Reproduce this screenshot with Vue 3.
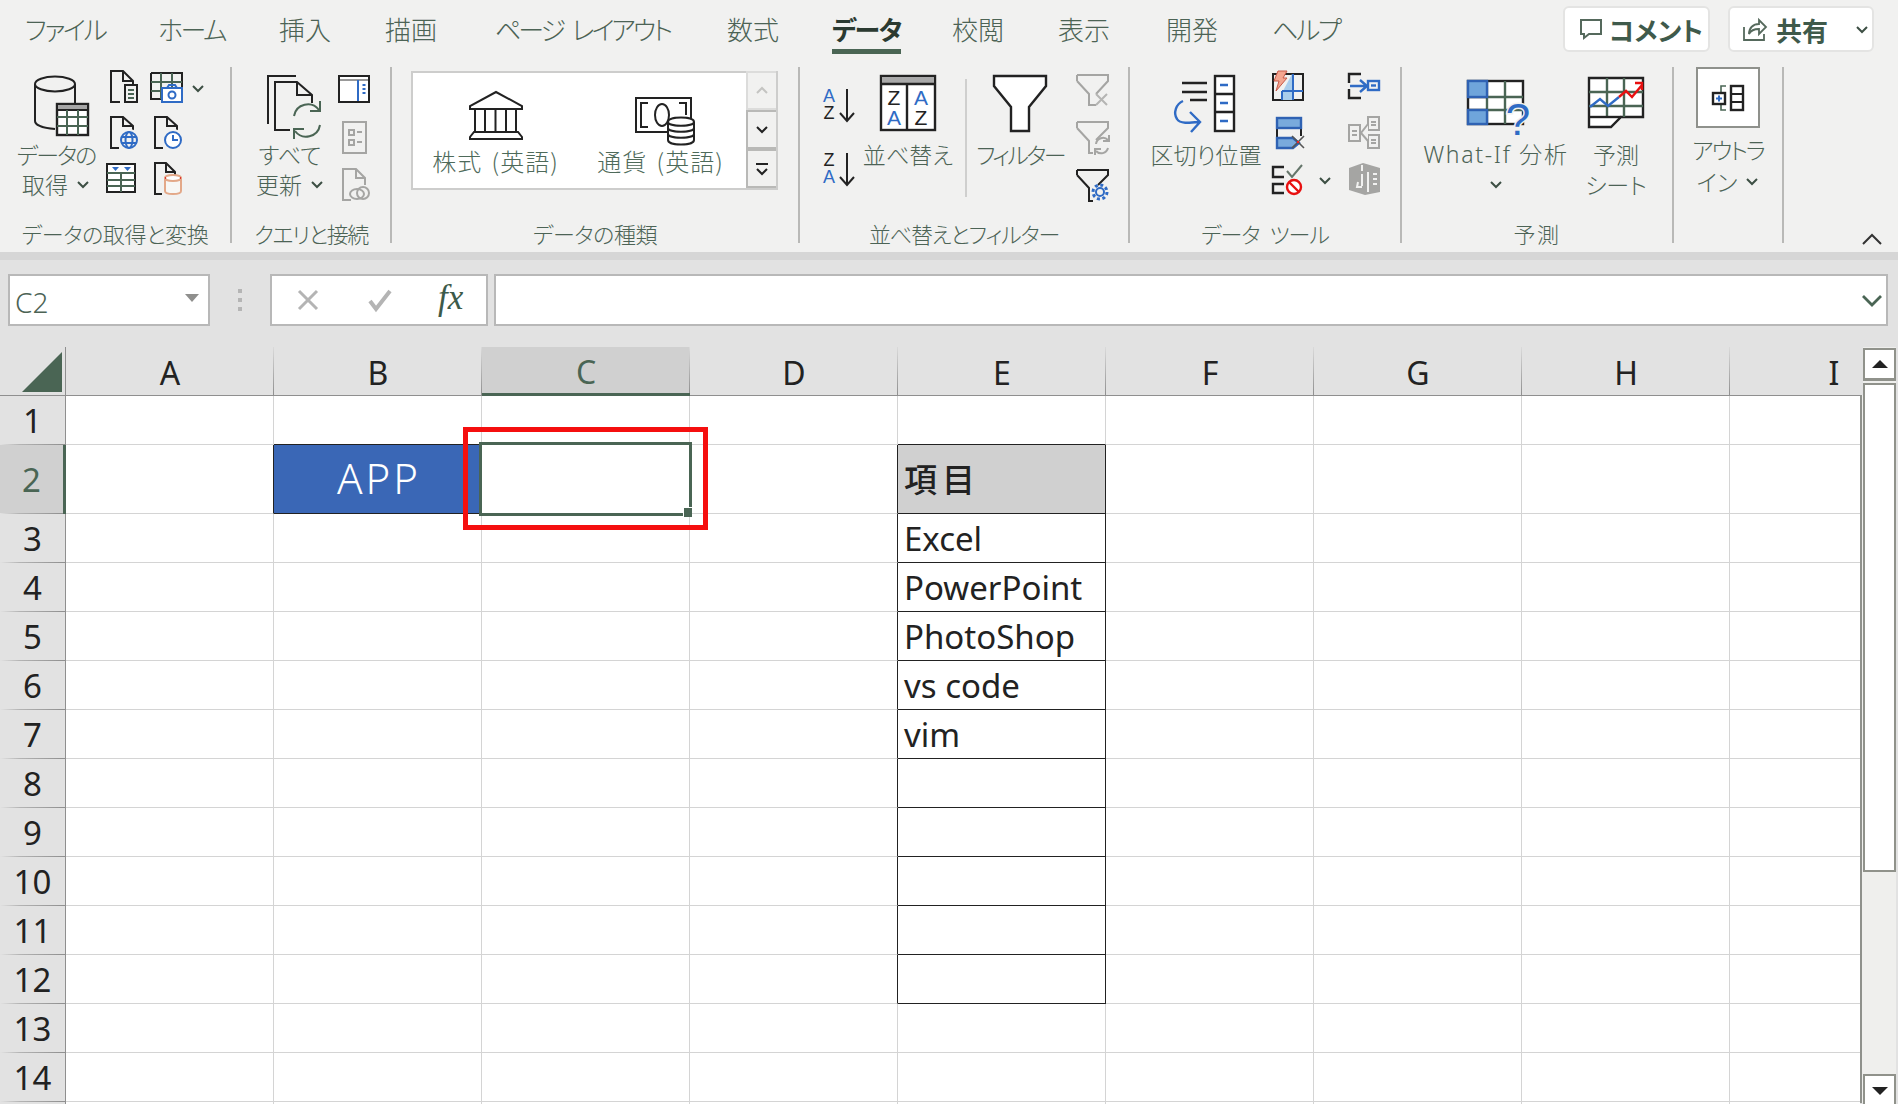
<script setup>
// width = distance to the next tab, text is left aligned inside
const tabs = [
  { label: 'ファイル', width: 133, kana: true },
  { label: 'ホーム', width: 121, kana: true },
  { label: '挿入', width: 106 },
  { label: '描画', width: 110 },
  { label: 'ページ レイアウト', width: 232, kana: true, spaced: true },
  { label: '数式', width: 105 },
  { label: 'データ', width: 120, active: true },
  { label: '校閲', width: 106 },
  { label: '表示', width: 108 },
  { label: '開発', width: 106 },
  { label: 'ヘルプ', width: 70, kana: true }
]
const columns = ['A', 'B', 'C', 'D', 'E', 'F', 'G', 'H', 'I']
const rowNumbers = Array.from({ length: 15 }, (_, i) => i + 1)

const cells = {
  B2: 'APP',
  E2: '項目',
  E3: 'Excel',
  E4: 'PowerPoint',
  E5: 'PhotoShop',
  E6: 'vs code',
  E7: 'vim'
}

function inItemTable(col, row) {
  return col === 'E' && row >= 2 && row <= 12
}

function cellClass(col, row) {
  const next = columns[columns.indexOf(col) + 1]
  return {
    'cell--app': col === 'B' && row === 2,
    'cell--head': col === 'E' && row === 2,
    'cell--framed': inItemTable(col, row),
    'cell--dark-right': inItemTable(next, row) || (next === 'B' && row === 2),
    'cell--dark-bottom': inItemTable(col, row + 1) || (col === 'B' && row === 1)
  }
}
</script>

<template>
  <div class="excel">
    <section class="ribbon">
      <div class="ribbon__top">
        <nav class="tabs">
          <div v-for="tab in tabs" :key="tab.label" class="tab" :style="{ width: tab.width + 'px' }">
            <span
              class="tab__label"
              :class="{ 'tab__label--active': tab.active, 'tab__label--kana': tab.kana, 'tab__label--spaced': tab.spaced }"
            >{{ tab.label }}</span>
          </div>
        </nav>
        <div class="actions">
          <button class="action action--comment" type="button">
            <svg width="24" height="22" viewBox="0 0 24 22" fill="none" stroke="#55695c" stroke-width="2"><path d="M2 2h20v14H10l-5 4v-4H2z"/></svg>
            <strong>コメント</strong>
          </button>
          <button class="action action--share" type="button">
            <svg width="26" height="24" viewBox="0 0 26 24" fill="none" stroke="#55695c" stroke-width="1.8"><path d="M2 10v13h20v-6"/><path d="M7 17c0-6 4-10 10-10V3l7 7-7 7v-5c-4 0-8 1-10 5z"/></svg>
            <strong>共有</strong>
            <svg class="chev chev--share" width="14" height="9" viewBox="0 0 14 9"><path d="M2 2l5 5 5-5"/></svg>
          </button>
        </div>
      </div>

      <div class="groups">
        <!-- データの取得と変換 -->
        <div class="group group--get">
          <div class="group__body">
            <div class="big big--w100">
              <svg class="big__icon big__icon--db" width="56" height="62" viewBox="0 0 56 62" fill="none" stroke="#222" stroke-width="2">
                <ellipse cx="21" cy="9" rx="20" ry="7.5"/>
                <path d="M1 9v37c0 4 8 7 20 8M41 9v19"/>
                <rect x="23" y="29" width="31" height="31" fill="#fff" stroke-width="2.4"/>
                <rect x="23" y="29" width="31" height="6" fill="#a6a6a6"/>
                <path stroke="#4a6554" d="M33 35v25M44 35v25M23 42h31M23 51h31"/>
              </svg>
              <span class="big__text big__text--tight">データの</span>
              <span class="big__text">取得<svg class="chev" width="14" height="9" viewBox="0 0 14 9"><path d="M2 2l5 5 5-5"/></svg></span>
            </div>
            <div class="small-col small-col--get1">
              <svg width="32" height="33" viewBox="0 0 32 33" fill="none" stroke="#222" stroke-width="2">
                <path d="M14 32H5V1h12l10 10v3M17 1v10h10"/>
                <rect x="19" y="15" width="12" height="17" fill="#f1f1f0"/>
                <path stroke="#4a6554" d="M22 20h6M22 24h6M22 28h6"/>
              </svg>
              <svg width="32" height="33" viewBox="0 0 32 33" fill="none" stroke="#222" stroke-width="2">
                <path d="M13 32H5V1h12l10 9v6M17 1v9h10"/>
                <circle cx="23" cy="24" r="11" fill="#f1f1f0" stroke="none"/>
                <g stroke="#2f6bc5"><circle cx="23" cy="24" r="8"/><ellipse cx="23" cy="24" rx="3.5" ry="8"/><path d="M15 21h16M15 27h16"/></g>
              </svg>
              <svg width="32" height="33" viewBox="0 0 32 33" fill="none" stroke="#222" stroke-width="2">
                <rect x="1" y="2" width="28" height="28" fill="#fff"/>
                <path fill="#2f6bc5" stroke="none" d="M6 5h7l-3.5 4zM18 5h7l-3.5 4z"/>
                <path stroke="#4a6554" d="M1 11h28M1 18h28M1 24h28M15 11v19"/>
              </svg>
            </div>
            <div class="small-col small-col--get2">
              <div class="small-row">
                <svg width="34" height="33" viewBox="0 0 34 33" fill="none" stroke="#222" stroke-width="2">
                  <path d="M1 3h31v14M1 3v26h10"/>
                  <path stroke="#4a6554" d="M11 3v26M22 3v14M1 12h31M1 21h10"/>
                  <rect x="12" y="18" width="20" height="14" fill="#fff" stroke="#2f6bc5"/>
                  <path stroke="#2f6bc5" d="M17 18l2-3h6l2 3"/>
                  <circle cx="22" cy="25" r="3.5" stroke="#2f6bc5"/>
                </svg>
                <svg class="chev chev--side" width="14" height="9" viewBox="0 0 14 9"><path d="M2 2l5 5 5-5"/></svg>
              </div>
              <svg width="34" height="33" viewBox="0 0 34 33" fill="none" stroke="#222" stroke-width="2">
                <path d="M13 32H5V1h12l10 9v6M17 1v9h10"/>
                <circle cx="23" cy="24" r="11" fill="#f1f1f0" stroke="none"/>
                <circle cx="23" cy="24" r="8" stroke="#2f6bc5" fill="#fff"/>
                <path stroke="#2f6bc5" d="M23 19v5h5"/>
              </svg>
              <svg width="34" height="33" viewBox="0 0 34 33" fill="none" stroke="#222" stroke-width="2">
                <path d="M12 32H5V1h11l9 9v3M16 1v9h9"/>
                <path fill="#f7f7f5" stroke="#e3a888" d="M15 16v13c0 4 16 4 16 0V16z"/>
                <ellipse cx="23" cy="16" rx="8" ry="3" fill="#fff" stroke="#e3a888"/>
                <path stroke="#d33" d="M15 16h1M30 16h1"/>
              </svg>
            </div>
          </div>
          <div class="group__label">データの取得と変換</div>
        </div>

        <!-- クエリと接続 -->
        <div class="group group--query">
          <div class="group__body">
            <div class="big big--w96">
              <svg class="big__icon" width="64" height="62" viewBox="0 0 64 62" fill="none" stroke="#222" stroke-width="2">
                <path d="M10 49V1h28"/>
                <path d="M32 55H17V7h22l15 13v8M39 7v13h15"/>
                <circle cx="49" cy="45" r="17" fill="#f1f1f0" stroke="none"/>
                <g stroke="#4a6554">
                  <path d="M36 41a14 14 0 0 1 25-6"/><path d="M62 26v10h-10"/>
                  <path d="M62 50a14 14 0 0 1-25 6"/><path d="M36 64V54h10"/>
                </g>
              </svg>
              <span class="big__text">すべて</span>
              <span class="big__text">更新<svg class="chev" width="14" height="9" viewBox="0 0 14 9"><path d="M2 2l5 5 5-5"/></svg></span>
            </div>
            <div class="small-col small-col--query">
              <svg width="32" height="33" viewBox="0 0 32 33" fill="none" stroke="#222" stroke-width="2">
                <rect x="1" y="1" width="30" height="26" fill="#fff"/>
                <path stroke="#999" d="M2 5h28"/>
                <path stroke="#2f6bc5" d="M20 5v21"/>
                <path stroke="#2f6bc5" stroke-width="3" stroke-dasharray="2 2" d="M26 9v12"/>
              </svg>
              <svg width="32" height="33" viewBox="0 0 32 33" fill="none" stroke="#a5a5a3" stroke-width="2">
                <rect x="5" y="1" width="23" height="31"/>
                <path d="M11 9h5v5h-5zM11 19h5v5h-5zM19 11h5M19 21h5"/>
              </svg>
              <svg width="32" height="34" viewBox="0 0 32 34" fill="none" stroke="#a5a5a3" stroke-width="2">
                <path d="M5 26V2h13l9 9v7M18 2v9h9M5 26v7h8"/>
                <ellipse cx="19" cy="27" rx="7" ry="5"/>
                <ellipse cx="25" cy="26" rx="6" ry="6" />
              </svg>
            </div>
          </div>
          <div class="group__label group__label--tight">クエリと接続</div>
        </div>

        <!-- データの種類 -->
        <div class="group group--types">
          <div class="group__body">
            <div class="gallery">
              <div class="gallery__item">
                <svg class="gallery__icon" width="54" height="56" viewBox="0 0 54 56" fill="none" stroke="#222" stroke-width="2">
                  <path d="M27 1L1 15v3h52v-3z"/>
                  <path d="M6 18v23M16 18v23M26.500 18v23M37 18v23M47 18v23"/>
                  <path d="M5 41h44l4 5v2H1v-2z"/>
                </svg>
                <span>株式 (英語)</span>
              </div>
              <div class="gallery__item">
                <svg class="gallery__icon gallery__icon--money" width="60" height="56" viewBox="0 -6 60 56" fill="none" stroke="#222" stroke-width="2">
                  <rect x="1" y="1" width="55" height="34"/>
                  <path d="M13 6H6v24h7M44 6h7v12"/>
                  <ellipse cx="27" cy="18" rx="7" ry="11"/>
                  <path fill="#fff" d="M33 25c0-6 26-6 26 0v18c0 6-26 6-26 0z"/>
                  <path d="M33 25c0 5 26 5 26 0M33 31c0 5 26 5 26 0M33 37c0 5 26 5 26 0"/>
                </svg>
                <span>通貨 (英語)</span>
              </div>
              <div class="gallery__scroll">
                <button class="gallery__btn gallery__btn--up" type="button">
                  <svg width="14" height="9" viewBox="0 0 14 9" fill="none" stroke="#c4c4c2" stroke-width="2"><path d="M2 7l5-5 5 5"/></svg>
                </button>
                <button class="gallery__btn" type="button">
                  <svg width="14" height="9" viewBox="0 0 14 9" fill="none" stroke="#222" stroke-width="2"><path d="M2 2l5 5 5-5"/></svg>
                </button>
                <button class="gallery__btn" type="button">
                  <svg width="14" height="14" viewBox="0 0 14 14" fill="none" stroke="#222" stroke-width="2"><path d="M1 2h12M2 7l5 5 5-5"/></svg>
                </button>
              </div>
            </div>
          </div>
          <div class="group__label">データの種類</div>
        </div>

        <!-- 並べ替えとフィルター -->
        <div class="group group--sort">
          <div class="group__body">
            <div class="sort-col">
              <svg width="36" height="34" viewBox="0 0 36 34" fill="none" stroke="#222" stroke-width="2">
                <text class="glyph glyph--blue" x="9" y="14" text-anchor="middle">A</text>
                <text class="glyph" x="9" y="31" text-anchor="middle">Z</text>
                <path d="M27 1v31M20 25l7 8 7-8"/>
              </svg>
              <svg width="36" height="34" viewBox="0 0 36 34" fill="none" stroke="#222" stroke-width="2">
                <text class="glyph" x="9" y="14" text-anchor="middle">Z</text>
                <text class="glyph glyph--blue" x="9" y="31" text-anchor="middle">A</text>
                <path d="M27 1v31M20 25l7 8 7-8"/>
              </svg>
            </div>
            <div class="big big--w104">
              <svg class="big__icon" width="56" height="62" viewBox="0 0 56 62" fill="none" stroke="#222" stroke-width="2.400">
                <rect x="1" y="1" width="54" height="54" fill="#fff"/>
                <rect x="2" y="2" width="52" height="7" fill="#a9a9a9" stroke="none"/>
                <path d="M1 9h54M27 9v46"/>
                <text class="glyph glyph--sheet" x="14" y="30" text-anchor="middle">Z</text>
                <text class="glyph glyph--sheet glyph--blue" x="14" y="50" text-anchor="middle">A</text>
                <text class="glyph glyph--sheet glyph--blue" x="41" y="30" text-anchor="middle">A</text>
                <text class="glyph glyph--sheet" x="41" y="50" text-anchor="middle">Z</text>
              </svg>
              <span class="big__text">並べ替え</span>
            </div>
            <div class="inner-sep"></div>
            <div class="big big--w106">
              <svg class="big__icon" width="56" height="62" viewBox="0 0 56 62" fill="#fff" stroke="#222" stroke-width="2.400">
                <path d="M2 1h52v10L37 32v24H19V32L2 11z"/>
              </svg>
              <span class="big__text big__text--tighter">フィルター</span>
            </div>
            <div class="small-col small-col--filter">
              <svg width="34" height="33" viewBox="0 0 34 33" fill="none" stroke="#a5a5a3" stroke-width="2">
                <path d="M1 5h31v6L20 24M1 11l12 13v11h7M1 5v6"/>
                <path d="M20 24l11 11M31 24L20 35" stroke="#b5b5b3" stroke-width="2"/>
              </svg>
              <svg width="34" height="33" viewBox="0 0 34 33" fill="none" stroke="#a5a5a3" stroke-width="2">
                <path d="M1 6h31v6L20 24M1 12l12 13v12h4M1 6v6"/>
                <path d="M20 28a7 7 0 0 1 12-4M33 19v6h-6M32 32a7 7 0 0 1-12 3M19 39v-6h6"/>
              </svg>
              <svg width="34" height="33" viewBox="0 0 34 33" fill="none" stroke="#222" stroke-width="2">
                <path d="M1 8h31v5L22 23M1 13l12 13v13h4M1 8v5" />
                <circle cx="24" cy="30" r="7" stroke="#2f6bc5" stroke-width="3" stroke-dasharray="3 2.500"/>
                <circle cx="24" cy="30" r="4" stroke="#2f6bc5"/>
              </svg>
            </div>
          </div>
          <div class="group__label group__label--tighter">並べ替えとフィルター</div>
        </div>

        <!-- データ ツール -->
        <div class="group group--tools">
          <div class="group__body">
            <div class="big big--w110">
              <svg class="big__icon" width="64" height="62" viewBox="0 0 64 62" fill="none" stroke="#222" stroke-width="2.400">
                <rect x="41" y="1" width="19" height="55" fill="#fff"/>
                <path d="M41 19h19M41 37h19"/>
                <path stroke="#2f6bc5" d="M46 10h8M46 28h8M46 46h8"/>
                <path d="M8 8h25M8 17h25M16 25h17"/>
                <path stroke="#2f6bc5" d="M9 26c-7 3-10 12-6 18 3 5 12 4 22 3M16 37l10 10-9 10"/>
              </svg>
              <span class="big__text">区切り位置</span>
            </div>
            <div class="small-col small-col--tools1">
              <svg width="34" height="33" viewBox="0 0 34 33" fill="none" stroke="#222" stroke-width="2">
                <rect x="1" y="4" width="30" height="26"/>
                <path fill="#a9cdec" stroke="none" d="M11 21L20 4h2v26H10z"/>
                <path stroke="#2f6bc5" d="M21 4v26M10 21v9M10 21h21"/>
                <path fill="#f3a58f" stroke="#c85a4a" stroke-width="1" d="M6 1h9l-4 7h4L4 21l3-10H2z"/>
              </svg>
              <svg width="34" height="33" viewBox="0 0 34 33" fill="none" stroke="#222" stroke-width="2">
                <path d="M5 12v11M29 12v8"/>
                <rect x="5" y="2" width="24" height="10" fill="#79aadc" stroke="#2f62b3" stroke-width="2.400"/>
                <path fill="#79aadc" stroke="#2f62b3" stroke-width="2.400" d="M5 22h16l6 5-6 5H5z"/>
                <path stroke="#555" stroke-width="1.600" d="M20 20l12 12M32 20L20 32"/>
                <path stroke="#e22" d="M25 26h2"/>
              </svg>
              <div class="small-row">
                <svg width="34" height="33" viewBox="0 0 34 33" fill="none" stroke="#222" stroke-width="2.400">
                  <path d="M12 5H1v10h11M12 22H1v9h11"/>
                  <path stroke="#65766b" stroke-width="2" d="M15 9l5 6 10-12"/>
                  <circle cx="22" cy="25" r="7" fill="#fff" stroke="#e81010"/>
                  <path stroke="#e81010" d="M17 20l10 10"/>
                </svg>
                <svg class="chev chev--tool" width="14" height="9" viewBox="0 0 14 9"><path d="M2 2l5 5 5-5"/></svg>
              </div>
            </div>
            <div class="small-col small-col--tools2">
              <svg width="32" height="33" viewBox="0 0 32 33" fill="none" stroke="#222" stroke-width="2.400">
                <path d="M13 4H1v9M1 19v9h12"/>
                <path stroke="#2f6bc5" d="M2 16h16M12 10l7 6-7 6"/>
                <rect x="20" y="11" width="11" height="9" stroke="#2f6bc5"/>
                <path stroke="#2f6bc5" d="M23 15.500h5"/>
              </svg>
              <svg width="32" height="33" viewBox="0 0 32 33" fill="#f1f1f0" stroke="#a5a5a3" stroke-width="2">
                <rect x="1" y="9" width="11" height="16"/>
                <rect x="20" y="1" width="11" height="13"/>
                <rect x="20" y="19" width="11" height="13"/>
                <path d="M20 8l-7 9 7 8M4 15h5M4 19h5M23 6h5M23 9h5M23 24h5M23 27h5"/>
              </svg>
              <svg width="32" height="33" viewBox="0 0 32 33">
                <path fill="#a5a5a3" d="M1 6l14-5 17 5v24l-15 3L1 28z"/>
                <path fill="none" stroke="#f1f1f0" stroke-width="2" d="M14 12v12M10 20l-1 5h5M14 3v6M20 10v20M25 12h4M25 17h4M25 22h4"/>
              </svg>
            </div>
          </div>
          <div class="group__label group__label--spaced">データ ツール</div>
        </div>

        <!-- 予測 -->
        <div class="group group--forecast">
          <div class="group__body">
            <div class="big big--w150">
              <svg class="big__icon" width="68" height="62" viewBox="0 0 68 62" fill="none" stroke="#222" stroke-width="2.400">
                <rect x="6" y="6" width="55" height="43" fill="#fff"/>
                <path stroke="#4a6554" d="M25 6v43M43 6v43M25 22h36M25 35h36"/>
                <path stroke="#222" d="M6 22h19M6 35h19"/>
                <rect x="6" y="6" width="19" height="16" fill="#6fa5db" stroke="#2f62b3"/>
                <rect x="6" y="35" width="19" height="14" fill="#6fa5db" stroke="#2f62b3"/>
                <text class="glyph glyph--question" x="56" y="60" text-anchor="middle">?</text>
              </svg>
              <span class="big__text big__text--latin">What-If 分析</span>
              <span class="big__text"><svg class="chev" width="14" height="9" viewBox="0 0 14 9"><path d="M2 2l5 5 5-5"/></svg></span>
            </div>
            <div class="big big--w90">
              <svg class="big__icon" width="56" height="62" viewBox="0 0 56 62" fill="none" stroke="#222" stroke-width="2.400">
                <path fill="#fff" d="M1 3h54v39H33L23 52H1z"/>
                <path stroke="#4a6554" d="M19 3v39M36 3v39M1 17h54M1 31h54"/>
                <path stroke="#222" d="M1 42h32"/>
                <path stroke="#2f6bc5" d="M2 32l10-8 8 7 11-9"/>
                <path stroke="#e81010" d="M31 22l7-6 6 6 10-12M47 8h7v7"/>
              </svg>
              <span class="big__text">予測</span>
              <span class="big__text">シート</span>
            </div>
          </div>
          <div class="group__label group__label--wide">予測</div>
        </div>

        <!-- アドイン -->
        <div class="group group--addin">
          <div class="group__body">
            <div class="big big--w100 big--addin">
              <div class="addin-box">
                <svg width="32" height="26" viewBox="0 0 32 26" fill="none" stroke="#222" stroke-width="2.400">
                  <path stroke="#4a6554" stroke-width="1.600" d="M14 1H9v6M9 19v6h5"/>
                  <rect x="1" y="8" width="12" height="11" fill="#fff"/>
                  <path stroke="#2f6bc5" stroke-width="2" d="M4 13.500h6M7 10.500v6"/>
                  <rect x="19" y="1" width="12" height="24"/>
                  <path stroke-width="1.800" d="M19 9h12M19 17h12"/>
                </svg>
              </div>
              <span class="big__text big__text--tight">アウトラ</span>
              <span class="big__text">イン<svg class="chev" width="14" height="9" viewBox="0 0 14 9"><path d="M2 2l5 5 5-5"/></svg></span>
            </div>
          </div>
        </div>

        <svg class="collapse" width="20" height="12" viewBox="0 0 20 12" fill="none" stroke="#333" stroke-width="2"><path d="M1 11l9-9 9 9"/></svg>
      </div>
    </section>

    <div class="ribbon-gap"></div>

    <section class="formula">
      <div class="namebox">
        <span>C2</span>
        <i class="namebox__arrow"></i>
      </div>
      <div class="formula__dots"><i></i><i></i><i></i></div>
      <div class="formula__btns">
        <svg width="24" height="24" viewBox="0 0 24 24" fill="none" stroke="#b4b4b4" stroke-width="3"><path d="M3 3l18 18M21 3L3 21"/></svg>
        <svg width="26" height="24" viewBox="0 0 26 24" fill="none" stroke="#b4b4b4" stroke-width="4"><path d="M3 13l6 8L23 3"/></svg>
        <span class="formula__fx">fx</span>
      </div>
      <div class="formula__input">
        <svg width="22" height="13" viewBox="0 0 22 13" fill="none" stroke="#4a6554" stroke-width="2.800"><path d="M2 2l9 9 9-9"/></svg>
      </div>
    </section>

    <section class="sheet">
      <div class="sheet__clip">
        <div class="grid">
          <div class="corner"><i></i></div>
          <div
            v-for="col in columns"
            :key="col"
            class="col-head"
            :class="{ 'col-head--active': col === 'C' }"
          >{{ col }}</div>

          <template v-for="row in rowNumbers" :key="row">
            <div class="row-head" :class="{ 'row-head--active': row === 2 }">{{ row }}</div>
            <div
              v-for="col in columns"
              :key="col + row"
              class="cell"
              :class="cellClass(col, row)"
            >{{ cells[col + row] }}</div>
          </template>

          <div class="selection"><i></i></div>
          <div class="callout"></div>
        </div>
      </div>
      <div class="sheet__edge"></div>
      <div class="scrollbar">
        <button class="scrollbar__btn" type="button"><i class="tri tri--up"></i></button>
        <div class="scrollbar__thumb"></div>
        <button class="scrollbar__btn scrollbar__btn--down" type="button"><i class="tri tri--down"></i></button>
      </div>
    </section>
  </div>
</template>

<style>
html,
body {
  margin: 0;
  background: #e2e2e2;
}
</style>

<style scoped>
.excel {
  width: 1898px;
  height: 1104px;
  overflow: hidden;
  display: flex;
  flex-direction: column;
  background: #e2e2e2;
  font-family: "Noto Sans CJK JP", "Noto Sans", sans-serif;
  font-feature-settings: "palt";
  color: #4c6355;
}

button {
  font: inherit;
  color: inherit;
  padding: 0;
}

svg {
  overflow: visible;
  flex: none;
  display: block;
}

/* ribbon */
.ribbon {
  height: 252px;
  background: #f1f1f0;
  flex: none;
}

.ribbon__top {
  height: 58px;
  display: flex;
  justify-content: space-between;
}

.tabs {
  display: flex;
  padding-left: 25px;
}

.tab {
  flex: none;
}

.tab__label {
  display: inline-block;
  height: 54px;
  box-sizing: border-box;
  font-size: 26px;
  line-height: 58px;
  font-weight: 300;
  white-space: nowrap;
}

.tab__label--kana {
  letter-spacing: -2.4px;
}

.tab__label--spaced {
  letter-spacing: -3px;
  word-spacing: 6px;
}

.tab__label--active {
  font-weight: 700;
  letter-spacing: -1.5px;
  color: #2b3a31;
  border-bottom: 5px solid #4a6554;
}

.actions {
  display: flex;
  gap: 18px;
  padding: 6px 24px 0 0;
}

.action {
  height: 46px;
  box-sizing: border-box;
  display: flex;
  align-items: center;
  background: #fff;
  border: 2px solid #e4e4e3;
  border-radius: 6px;
}

.action strong {
  font-size: 26px;
  font-weight: 700;
  color: #3f5a4b;
  white-space: nowrap;
}

.action--comment {
  width: 147px;
  padding-left: 14px;
  gap: 6px;
}

.action--share {
  width: 146px;
  padding-left: 12px;
  gap: 8px;
}

.chev {
  fill: none;
  stroke: #3d4f44;
  stroke-width: 2;
  display: inline-block;
}

.chev--share {
  margin-left: 19px;
}

.groups {
  display: flex;
  align-items: flex-start;
  padding-top: 9px;
  position: relative;
}

.group {
  height: 176px;
  box-sizing: border-box;
  border-right: 2px solid #b9b9b7;
  display: flex;
  flex-direction: column;
  flex: none;
}

.group__body {
  height: 152px;
  display: flex;
  align-items: flex-start;
}

.group__label {
  height: 24px;
  font-size: 22px;
  line-height: 28px;
  font-weight: 300;
  letter-spacing: -0.4px;
  text-align: center;
  white-space: nowrap;
}

.group__label--tight {
  letter-spacing: -1.4px;
}

.group__label--tighter {
  letter-spacing: -1.2px;
}

.group__label--spaced {
  letter-spacing: -1px;
  word-spacing: 6px;
}

.group__label--wide {
  letter-spacing: 1.5px;
}

.group--get { width: 232px; padding-left: 6px; }
.group--get .group__label { margin-left: -6px; }
.group--query { width: 160px; padding-left: 10px; }
.group--query .group__label { margin-left: -10px; }
.group--types { width: 408px; padding-left: 19px; }
.group--types .group__label { margin-left: -19px; }
.group--sort { width: 330px; padding-left: 20px; }
.group--sort .group__label { margin-left: -20px; }
.group--tools { width: 272px; padding-left: 21px; }
.group--tools .group__label { margin-left: -21px; }
.group--forecast { width: 272px; padding-left: 19px; }
.group--forecast .group__label { margin-left: -19px; }
.group--addin { width: 110px; padding-left: 4px; }

.big {
  display: flex;
  flex-direction: column;
  align-items: center;
  flex: none;
  white-space: nowrap;
}

.big--w90 { width: 90px; }
.big--w96 { width: 96px; }
.big--w100 { width: 100px; }
.big--w104 { width: 104px; }
.big--w106 { width: 106px; }
.big--w110 { width: 110px; }
.big--w150 { width: 150px; }

.big__icon {
  margin-top: 8px;
  margin-bottom: 2px;
}

.big__icon--db {
  margin-left: 12px;
}

.big__text {
  height: 30px;
  font-size: 23px;
  line-height: 30px;
  font-weight: 300;
  display: flex;
  align-items: center;
  gap: 8px;
}

.big__text--tight {
  letter-spacing: -2px;
}

.big__text--tighter {
  letter-spacing: -2.6px;
}

.big__text--latin {
  font-family: "Noto Sans", "Noto Sans CJK JP", sans-serif;
  font-weight: 300;
  letter-spacing: 1.7px;
}

.small-col {
  display: flex;
  flex-direction: column;
  gap: 13px;
  margin-top: 3px;
  flex: none;
}

.small-row {
  display: flex;
  height: 33px;
}

.small-col--get1 { width: 32px; }
.small-col--get2 { margin-left: 12px; }
.small-col--query { margin-top: 8px; }
.small-col--filter { margin-left: 3px; }
.small-col--tools1 { width: 60px; margin-left: 11px; }
.small-col--tools2 { margin-left: 16px; }

.chev--side {
  margin: 14px 0 0 7px;
}

.chev--tool {
  margin: 14px 0 0 12px;
}

.gallery {
  width: 367px;
  height: 119px;
  margin-top: 4px;
  box-sizing: border-box;
  display: flex;
  background: #fff;
  border: 2px solid #cdcdcc;
}

.gallery__item {
  width: 166px;
  box-sizing: border-box;
  padding-top: 18px;
  display: flex;
  flex-direction: column;
  align-items: center;
  font-size: 24px;
  line-height: 28px;
  font-weight: 300;
  letter-spacing: 1px;
  word-spacing: 3px;
  color: #4e6a5a;
  white-space: nowrap;
}

.gallery__icon--money {
  margin-left: 9px;
}

.gallery__scroll {
  margin-left: 3px;
  width: 30px;
  display: flex;
  flex-direction: column;
  gap: 2px;
  flex: none;
}

.gallery__btn {
  flex: 1;
  display: flex;
  align-items: center;
  justify-content: center;
  background: #f1f1f0;
  border: 2px solid #b9b9b7;
  border-width: 2px 0 2px 2px;
  margin-top: -2px;
}

.gallery__btn--up {
  border-color: #dcdcdb;
}

.sort-col {
  width: 36px;
  margin-top: 21px;
  display: flex;
  flex-direction: column;
  gap: 30px;
  flex: none;
}

.glyph {
  font-family: "Liberation Sans", sans-serif;
  font-size: 18px;
  font-weight: 400;
  fill: #222;
  stroke: none;
}

.glyph--sheet {
  font-size: 21px;
}

.glyph--blue {
  fill: #2f6bc5;
}

.glyph--question {
  font-size: 44px;
  fill: #2f6bc5;
  stroke: #f1f1f0;
  stroke-width: 3px;
  paint-order: stroke;
}

.inner-sep {
  width: 2px;
  height: 118px;
  margin: 12px 0 0 5px;
  background: #cfcfce;
  flex: none;
}

.addin-box {
  width: 64px;
  height: 61px;
  box-sizing: border-box;
  margin-bottom: 5px;
  display: flex;
  align-items: center;
  justify-content: center;
  background: #fff;
  border: 2px solid #8f918c;
}

.big--addin .big__text {
  height: 32px;
  line-height: 32px;
}

.collapse {
  position: absolute;
  left: 1862px;
  top: 175px;
}

.ribbon-gap {
  height: 8px;
  background: #d6d6d6;
  flex: none;
}

/* formula bar */
.formula {
  height: 87px;
  box-sizing: border-box;
  padding: 14px 10px 21px 8px;
  display: flex;
  flex: none;
}

.namebox {
  width: 202px;
  box-sizing: border-box;
  padding: 3px 9px 0 5px;
  display: flex;
  align-items: center;
  justify-content: space-between;
  background: #fff;
  border: 2px solid #b8b8b8;
  font-family: "Noto Sans", sans-serif;
  font-size: 28px;
  font-weight: 300;
  color: #4c6355;
}

.namebox__arrow {
  width: 0;
  height: 0;
  margin-bottom: 8px;
  border-left: 7px solid transparent;
  border-right: 7px solid transparent;
  border-top: 8px solid #8f8f8d;
}

.formula__dots {
  width: 60px;
  display: flex;
  flex-direction: column;
  align-items: center;
  justify-content: center;
  gap: 5px;
  flex: none;
}

.formula__dots i {
  width: 4px;
  height: 4px;
  background: #b5b5b5;
}

.formula__btns {
  width: 218px;
  box-sizing: border-box;
  padding-left: 24px;
  display: flex;
  align-items: center;
  gap: 47px;
  background: #fff;
  border: 2px solid #b8b8b8;
  flex: none;
}

.formula__fx {
  margin-left: -2px;
  margin-top: -6px;
  font-family: "Liberation Serif", serif;
  font-size: 35px;
  font-style: italic;
  font-weight: 400;
  color: #3d5a4a;
  line-height: 1;
}

.formula__input {
  flex: 1;
  margin-left: 6px;
  padding-right: 3px;
  display: flex;
  align-items: center;
  justify-content: flex-end;
  background: #fff;
  border: 2px solid #b8b8b8;
}

/* sheet */
.sheet {
  flex: 1;
  min-height: 0;
  display: flex;
}

.sheet__clip {
  width: 1860px;
  overflow: hidden;
  flex: none;
}

.grid {
  position: relative;
  display: grid;
  grid-template-columns: 66px repeat(9, 208px);
  grid-template-rows: 49px 49px 69px repeat(13, 49px);
  width: max-content;
  background: #fff;
  font-family: "Noto Sans", "Noto Sans CJK JP", sans-serif;
  color: #222;
}

.corner {
  position: relative;
  box-sizing: border-box;
  background: #e2e2e2;
  border-bottom: 1px solid #8f8f8f;
  border-right: 1px solid #8f8f8f;
}

.corner i {
  position: absolute;
  left: 22px;
  top: 5px;
  width: 40px;
  height: 40px;
  background: #4a6554;
  clip-path: polygon(100% 0, 100% 100%, 0 100%);
}

.col-head {
  box-sizing: border-box;
  display: flex;
  align-items: center;
  justify-content: center;
  padding-top: 2px;
  font-size: 32px;
  background: linear-gradient(#dadada, #8f8f8f) right / 1px 100% no-repeat #e2e2e2;
  border-bottom: 1px solid #8f8f8f;
}

.col-head--active {
  background-color: #d0d0d0;
  color: #4a6554;
  border-bottom: 3px solid #4a6554;
}

.row-head {
  box-sizing: border-box;
  display: flex;
  align-items: center;
  justify-content: center;
  padding-bottom: 1px;
  font-size: 33px;
  background: linear-gradient(to right, #e2e2e2, #b4b4b4 30%, #8f8f8f) bottom / 100% 1px no-repeat #e2e2e2;
  border-right: 1px solid #8f8f8f;
}

.row-head--active {
  background-color: #d0d0d0;
  color: #4a6554;
  border-right: 3px solid #4a6554;
}

.cell {
  box-sizing: border-box;
  padding-left: 6px;
  display: flex;
  align-items: center;
  font-size: 33px;
  white-space: nowrap;
  border-right: 1px solid #d4d4d4;
  border-bottom: 1px solid #d4d4d4;
}

.cell--dark-right {
  border-right-color: #222;
}

.cell--dark-bottom {
  border-bottom-color: #222;
}

.cell--framed {
  border-right-color: #222;
  border-bottom-color: #222;
}

.cell--head {
  padding-bottom: 2px;
  background: #d0d0d0;
  font-family: "Noto Sans CJK JP", sans-serif;
  font-weight: 500;
  letter-spacing: 5px;
}

.cell--app {
  padding-left: 3px;
  padding-bottom: 4px;
  justify-content: center;
  background: #3a67b6;
  color: #fff;
  font-size: 42px;
  font-weight: 300;
  letter-spacing: 3px;
  border-bottom-color: #222;
}

.selection {
  position: absolute;
  left: 479px;
  top: 95px;
  width: 213px;
  height: 74px;
  box-sizing: border-box;
  border: 3px solid #4a6554;
}

.selection i {
  position: absolute;
  right: -3px;
  bottom: -4px;
  width: 8px;
  height: 9px;
  background: #4a6554;
  border-left: 1px solid #fff;
  border-top: 1px solid #fff;
}

.callout {
  position: absolute;
  left: 463px;
  top: 80px;
  width: 245px;
  height: 103px;
  box-sizing: border-box;
  border: 5px solid #f50f0f;
}

.sheet__edge {
  width: 3px;
  height: 708px;
  margin-top: 48px;
  box-sizing: border-box;
  border-left: 2px solid #8f918c;
  background: #efefed;
  flex: none;
}

.scrollbar {
  width: 33px;
  height: 757px;
  display: flex;
  flex-direction: column;
  background: #efefed;
  flex: none;
}

.scrollbar__btn {
  height: 33px;
  margin-top: 1px;
  box-sizing: border-box;
  display: flex;
  align-items: center;
  justify-content: center;
  background: #fff;
  border: 2px solid #90928b;
  border-bottom-width: 3px;
  flex: none;
}

.scrollbar__btn--down {
  height: 30px;
  margin-top: auto;
  border-bottom: 0;
  align-items: flex-start;
  padding-top: 11px;
}

.scrollbar__thumb {
  height: 489px;
  margin-top: 2px;
  box-sizing: border-box;
  background: #fff;
  border: 2px solid #90928b;
  flex: none;
}

.tri {
  width: 0;
  height: 0;
  border-left: 8px solid transparent;
  border-right: 8px solid transparent;
}

.tri--up {
  border-bottom: 8px solid #222;
}

.tri--down {
  border-top: 8px solid #222;
}
</style>
